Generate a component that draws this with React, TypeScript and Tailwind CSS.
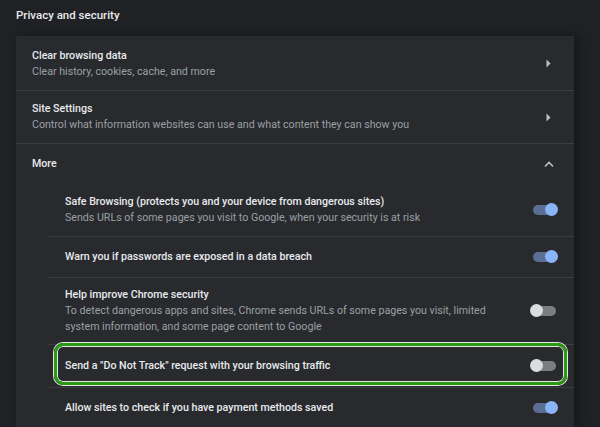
import React from "react";

function Toggle({ on }: { on: boolean }) {
  return (
    <div className="relative w-[28px] h-[14px] shrink-0">
      <div
        className={
          on
            ? "absolute left-[3px] top-[2px] w-[22px] h-[10px] rounded-full bg-[#5b6f96]"
            : "absolute left-[3px] top-[2px] w-[23px] h-[10px] rounded-full bg-[#7b7d80]"
        }
      />
      <div
        className={
          on
            ? "absolute right-0 top-0 w-[13px] h-[13px] rounded-full bg-[#8ab4f8]"
            : "absolute left-0 top-0 w-[13px] h-[13px] rounded-full bg-[#dadce0]"
        }
      />
    </div>
  );
}

function ArrowRight() {
  return (
    <svg width="5" height="9" viewBox="0 0 5 9" className="shrink-0">
      <path d="M0.5 0.5 L4.5 4.5 L0.5 8.5 Z" fill="#bdc1c6" />
    </svg>
  );
}

function ChevronUp() {
  return (
    <svg width="10" height="7" viewBox="0 0 10 7" className="shrink-0">
      <path d="M1 5.5 L5 1.5 L9 5.5" fill="none" stroke="#bdc1c6" strokeWidth="1.6" />
    </svg>
  );
}

export default function App() {
  return (
    <div
      className="w-[600px] h-[427px] overflow-hidden bg-[#202124] text-[#e8eaed]"
      style={{ fontFamily: "Roboto, 'Noto Sans', sans-serif" }}
    >
      <div className="pl-4 pt-[7px] h-[36px] text-[11.5px] leading-[16px] font-medium text-[#e8eaed]">
        Privacy and security
      </div>
      <div className="ml-4 w-[558px] bg-[#292a2d] shadow-[4px_0_10px_rgba(0,0,0,0.35)] text-[10.65px]">
        <div className="h-[54px] flex items-center pl-4 pr-[23px] pt-[1px]">
          <div className="flex-1 flex flex-col">
            <div className="leading-[16px] font-medium">Clear browsing data</div>
            <div className="leading-[16px] text-[#9aa0a6]">Clear history, cookies, cache, and more</div>
          </div>
          <ArrowRight />
        </div>
        <div className="h-[53px] flex items-center pl-4 pr-[23px] border-t border-[#3c3d40]">
          <div className="flex-1 flex flex-col">
            <div className="leading-[16px] font-medium">Site Settings</div>
            <div className="leading-[16px] text-[#9aa0a6]">
              Control what information websites can use and what content they can show you
            </div>
          </div>
          <ArrowRight />
        </div>
        <div className="h-[41px] flex items-center pl-4 pr-[20px] border-t border-[#3c3d40]">
          <div className="flex-1 leading-[16px] font-medium">More</div>
          <ChevronUp />
        </div>
        <div className="pl-8">
          <div className="h-[52px] flex items-center pl-[17px] pr-[16px]">
            <div className="flex-1 flex flex-col">
              <div className="leading-[16px] font-medium">
                Safe Browsing (protects you and your device from dangerous sites)
              </div>
              <div className="leading-[16px] text-[#9aa0a6]">
                Sends URLs of some pages you visit to Google, when your security is at risk
              </div>
            </div>
            <Toggle on />
          </div>
          <div className="h-[41px] flex items-center pl-[17px] pr-[16px] border-t border-[#3c3d40]">
            <div className="flex-1 leading-[16px] font-medium">
              Warn you if passwords are exposed in a data breach
            </div>
            <Toggle on />
          </div>
          <div className="h-[67px] flex items-center pl-[17px] pr-[16px] border-t border-[#3c3d40]">
            <div className="flex-1 flex flex-col">
              <div className="leading-[16px] font-medium">Help improve Chrome security</div>
              <div className="leading-[16px] text-[#9aa0a6] w-[445px]">
                To detect dangerous apps and sites, Chrome sends URLs of some pages you visit, limited
                system information, and some page content to Google
              </div>
            </div>
            <Toggle on={false} />
          </div>
          <div className="relative h-[43px] flex items-center pl-[17px] pr-[16px] border-t border-[#3c3d40]">
            <div className="flex-1 leading-[16px] font-medium">
              Send a "Do Not Track" request with your browsing traffic
            </div>
            <Toggle on={false} />
            <div className="absolute left-[6px] right-[7px] top-[-2px] bottom-[2px] rounded-[9px] border-[3px] border-[#2a9a14] shadow-[0_0_0_1px_#e6e6e6,inset_0_0_0_1px_#e6e6e6]" />
          </div>
          <div className="h-[41px] flex items-center pl-[17px] pr-[16px] border-t border-[#3c3d40]">
            <div className="flex-1 leading-[16px] font-medium">
              Allow sites to check if you have payment methods saved
            </div>
            <Toggle on />
          </div>
        </div>
      </div>
    </div>
  );
}
